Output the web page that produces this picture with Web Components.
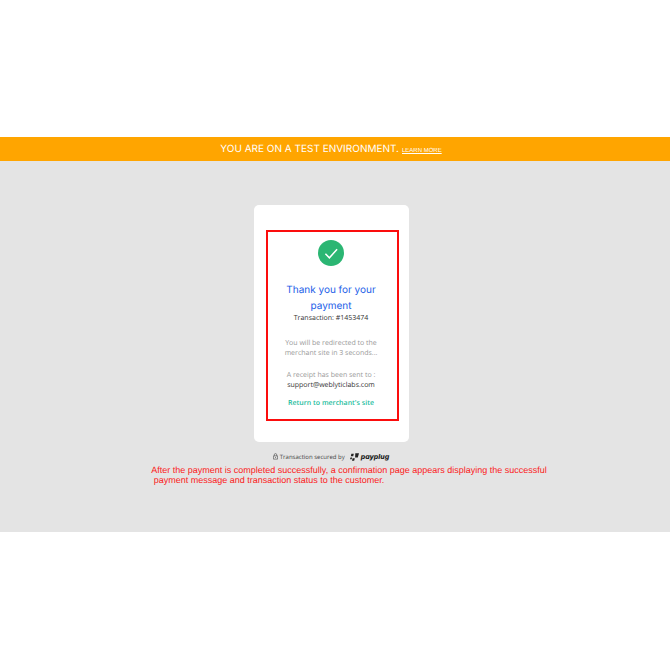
<!DOCTYPE html>
<html lang="en">
<head>
<meta charset="utf-8">
<meta name="viewport" content="width=device-width, initial-scale=1">
<title>Payment confirmation</title>
<style>
    body {
        box-sizing: border-box;
        margin: 0;
        padding-bottom: 1px;
        min-height: 100vh;
        display: flex;
        flex-direction: column;
        justify-content: center;
        background: #fff;
        font-family: "Open Sans", sans-serif;
        text-rendering: geometricPrecision;
    }
</style>
</head>
<body>
<payment-page>
    <test-banner slot="banner" href="#learn">YOU ARE ON A TEST ENVIRONMENT.</test-banner>
    <payment-card>
        <payment-receipt transaction="1453474" seconds="3" email="support@weblyticlabs.com"></payment-receipt>
    </payment-card>
    <secured-by>Transaction secured by</secured-by>
    <page-note slot="note">After the payment is completed successfully, a confirmation page appears displaying the successful<br>&nbsp;payment message and transaction status to the customer.</page-note>
</payment-page>

<script>
class PaymentPage extends HTMLElement {
    constructor() {
        super();
        this.shadow = this.attachShadow({ mode: "open" });
        this.shadow.innerHTML = `
        <style>
            :host {
                display: block;
                background: #e4e4e4;
            }
            main {
                display: flex;
                flex-direction: column;
                align-items: center;
                padding: 44px 8px 0 0;
            }
            footer {
                display: flex;
                justify-content: center;
                padding: 3px 0 47px 28px;
            }
        </style>
        <slot name="banner"></slot>
        <main><slot></slot></main>
        <footer><slot name="note"></slot></footer>`;
    }
}

class TestBanner extends HTMLElement {
    constructor() {
        super();
        this.shadow = this.attachShadow({ mode: "open" });
    }

    connectedCallback() {
        this.shadow.innerHTML = `
        <style>
            :host {
                display: flex;
                justify-content: center;
                align-items: baseline;
                gap: 3px;
                padding: 1px 8px 0 0;
                background: #ffa500;
                color: #fff;
                font: 10px/23px Inter, sans-serif;
            }
            a {
                color: inherit;
                font: 6px "Liberation Sans", sans-serif;
            }
        </style>
        <span><slot></slot></span>
        <a href="${this.getAttribute('href')}">LEARN MORE</a>`;
    }
}

class PaymentCard extends HTMLElement {
    constructor() {
        super();
        this.shadow = this.attachShadow({ mode: "open" });
        this.shadow.innerHTML = `
        <style>
            :host {
                display: block;
                box-sizing: border-box;
                width: 155px;
                padding: 25px 10px 21px 12px;
                border-radius: 5px;
                background: #fff;
            }
        </style>
        <slot></slot>`;
    }
}

class PaymentReceipt extends HTMLElement {
    constructor() {
        super();
        this.shadow = this.attachShadow({ mode: "open" });
    }

    connectedCallback() {
        this.shadow.innerHTML = `
        <style>
            :host {
                display: flex;
                flex-direction: column;
                align-items: center;
                border: 2px solid #fb0d0d;
                padding: 8px 12px 10px 10px;
                text-align: center;
                font-size: 7px;
                line-height: 10px;
                color: #999;
            }
            svg {
                width: 26px;
                height: 26px;
            }
            h1, p {
                margin: 0;
            }
            h1 {
                margin-top: 16px;
                font: 10px/16px Inter, sans-serif;
                color: #2360e8;
            }
            .redirect {
                margin: 15px 0 12px;
            }
            .dark {
                color: #333;
            }
            a {
                margin-top: 8px;
                font-weight: 600;
                color: #1abc9c;
                text-decoration: none;
            }
        </style>
        <svg viewBox="0 0 26 26" aria-hidden="true">
            <circle cx="13" cy="13" r="13" fill="#2bb673"/>
            <path d="M7.4 13.8l4 4 7.7-8.5" fill="none" stroke="#fff" stroke-width="1.5"/>
        </svg>
        <h1>Thank you for your<br>payment</h1>
        <p class="dark">Transaction: #${this.getAttribute('transaction')}</p>
        <p class="redirect">You will be redirected to the<br>merchant site in ${this.getAttribute('seconds')} seconds...</p>
        <p>A receipt has been sent to :</p>
        <p class="dark">${this.getAttribute('email')}</p>
        <a href="#merchant">Return to merchant's site</a>`;
    }
}

class SecuredBy extends HTMLElement {
    constructor() {
        super();
        this.shadow = this.attachShadow({ mode: "open" });
        this.shadow.innerHTML = `
        <style>
            :host {
                display: flex;
                align-items: center;
                margin-top: 10px;
                font-size: 6px;
                line-height: 10px;
                color: #444;
            }
            .lock {
                width: 5px;
                height: 7px;
                margin: 0 2px 2px 0;
            }
            .mark {
                width: 9px;
                height: 8px;
                margin: 0 2px 0 5px;
            }
            b {
                font: italic 800 7px/10px Inter, sans-serif;
                color: #222;
            }
        </style>
        <svg class="lock" viewBox="0 0 5 7" aria-hidden="true">
            <path d="M.4 2.9h4.2v3.2H.4zM1.3 2.9V1.8a1.2 1.2 0 0 1 2.4 0v1.1M2.5 4v1" fill="none" stroke="#444" stroke-width=".6"/>
        </svg>
        <slot></slot>
        <svg class="mark" viewBox="0 0 9 8" aria-hidden="true">
            <path d="M1.4.8h2.4L3.2 3.2H.8zM5.3.3H9L7.8 4.4H5.1zM.5 4.4h1.6L1.7 6.3H0zM2.6 5.3h2.2L4.2 7.7H2z" fill="#222"/>
        </svg>
        <b>payplug</b>`;
    }
}

class PageNote extends HTMLElement {
    constructor() {
        super();
        this.shadow = this.attachShadow({ mode: "open" });
        this.shadow.innerHTML = `
        <style>
            :host {
                display: block;
                font: 9px/10px "Liberation Sans", sans-serif;
                color: #fb2020;
            }
        </style>
        <slot></slot>`;
    }
}

customElements.define('payment-page', PaymentPage);
customElements.define('test-banner', TestBanner);
customElements.define('payment-card', PaymentCard);
customElements.define('payment-receipt', PaymentReceipt);
customElements.define('secured-by', SecuredBy);
customElements.define('page-note', PageNote);
</script>
</body>
</html>
